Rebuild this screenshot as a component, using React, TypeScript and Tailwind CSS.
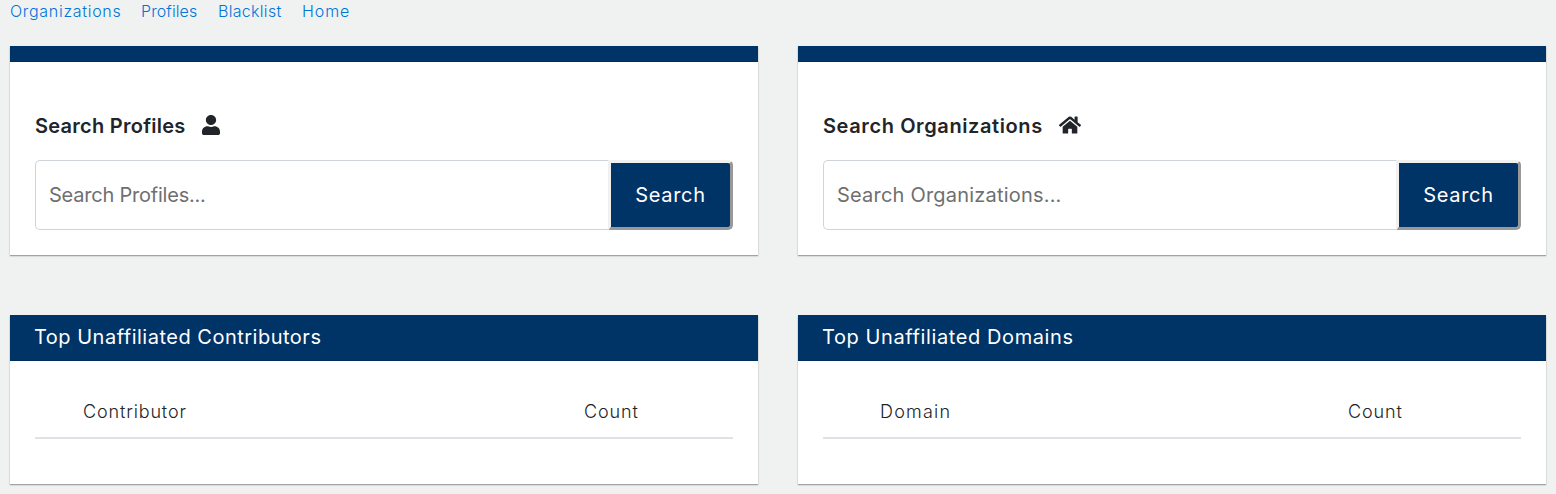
import { FaUser, FaHome } from "react-icons/fa";
import type { ReactNode } from "react";

const cardShadow = "shadow-[0_1px_1px_rgba(0,0,0,0.25),0_1px_2px_rgba(0,0,0,0.15)]";

function SearchCard({ title, placeholder, tracking, icon, label }: { title: ReactNode; placeholder: string; tracking: string; icon: ReactNode; label: string }) {
  return (
    <section className={`h-[209px] bg-white ${cardShadow}`}>
      <div className="h-4 border-b border-[#002d5c] bg-[#003366]" />
      <div className="px-[25px] pt-[49px]">
        <h2 className="flex h-[30px] items-center text-[20px] font-semibold text-[#212529]">
          {title}
          {icon}
        </h2>
        <form className="mt-[19px] flex h-[70px]" onSubmit={(e) => e.preventDefault()}>
          <input
            aria-label={label}
            placeholder={placeholder}
            className={`min-w-0 flex-1 rounded-l-[5px] border border-r-0 border-[#ced4da] bg-white px-[13px] text-[20px] outline-none placeholder:text-[#6f6f6f] ${tracking}`}
          />
          <button className="w-[125px] rounded-r-[5px] border-[3px] border-t-[#f0f0f0] border-r-[#999999] border-b-[#999999] border-l-[#f0f0f0] bg-[#003366] text-[20px] tracking-[0.7px] text-white">
            Search
          </button>
        </form>
      </div>
    </section>
  );
}

function TableCard({ title, children }: { title: ReactNode; children: ReactNode }) {
  return (
    <section className={`h-[169px] bg-white ${cardShadow}`}>
      <h2 className="flex h-[46px] items-center border-b border-[#002d5c] bg-[#003366] px-6 pb-0.5 text-[20px] text-white">{title}</h2>
      <div className="px-[25px] pt-[25px]">
        <div className="flex h-[53px] items-center border-b-2 border-[#dee2e6] text-[18px] font-light text-[#212529]">{children}</div>
      </div>
    </section>
  );
}

export default function App() {
  return (
    <div className="h-[494px] overflow-hidden bg-[#f0f2f1] px-[10px] font-['Inter',sans-serif]">
      <nav className="flex h-[46px] gap-5 text-[16px] leading-[22px] font-light text-[#0074d9]">
        <a href="#" className="w-[111px] whitespace-nowrap tracking-[0.7px]">Organizations</a>
        <a href="#" className="w-[57px] whitespace-nowrap tracking-[0.1px]">Profiles</a>
        <a href="#" className="w-[64px] whitespace-nowrap tracking-[0.3px]">Blacklist</a>
        <a href="#" className="w-[48px] whitespace-nowrap tracking-[0.9px]">Home</a>
      </nav>
      <main className="grid grid-cols-2 gap-x-10 gap-y-[60px]">
        <SearchCard
          label="Profiles"
          title={<span className="w-[167px] whitespace-nowrap tracking-[0.26px]">Search Profiles</span>}
          placeholder="Search Profiles..."
          tracking="tracking-[-0.22px]"
          icon={<FaUser className="mb-0.5 h-5 w-[18px]" preserveAspectRatio="none" />}
        />
        <SearchCard
          label="Organizations"
          title={<span className="w-[236px] whitespace-nowrap tracking-[0.6px]">Search Organizations</span>}
          placeholder="Search Organizations..."
          tracking="tracking-[0.2px]"
          icon={<FaHome className="mb-0.5 size-[22px]" />}
        />
        <TableCard title={<span className="tracking-[0.5px]">Top Unaffiliated Contributors</span>}>
          <span className="w-[501px] pl-12 tracking-[0.85px]">Contributor</span>
          <span className="ml-12 tracking-[0.9px]">Count</span>
        </TableCard>
        <TableCard title={<span className="tracking-[0.6px]">Top Unaffiliated Domains</span>}>
          <span className="w-[525px] pl-[57px] tracking-[1.2px]">Domain</span>
          <span className="tracking-[0.9px]">Count</span>
        </TableCard>
      </main>
    </div>
  );
}
